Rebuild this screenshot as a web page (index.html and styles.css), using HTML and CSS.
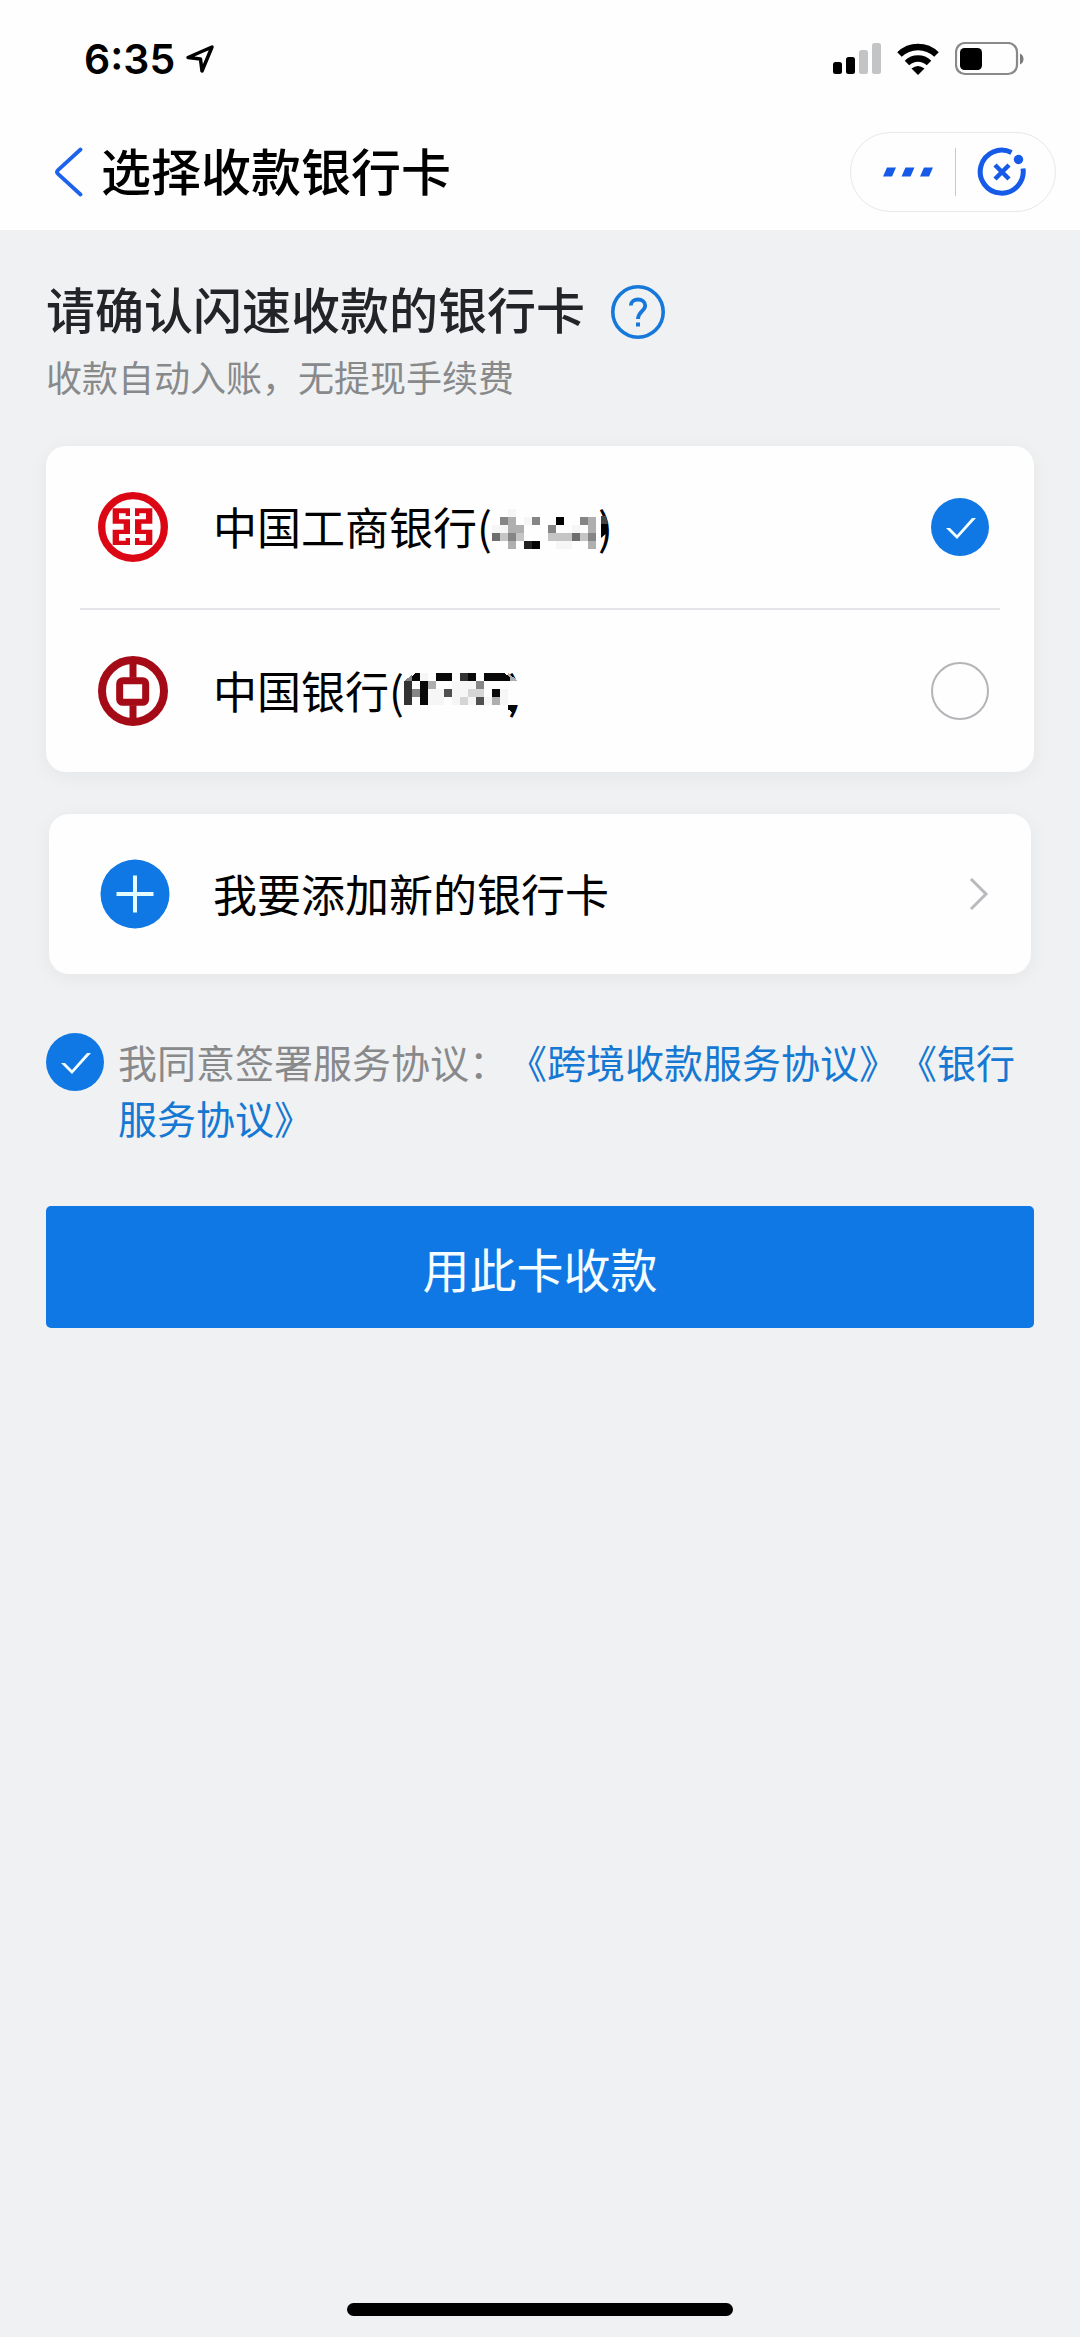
FILE: index.html
```html
<!DOCTYPE html>
<html lang="zh-CN">
<head>
<meta charset="utf-8">
<meta name="viewport" content="width=device-width, initial-scale=1">
<title>选择收款银行卡</title>
<link rel="stylesheet" href="styles.css">
</head>
<body>
<header class="top">
  <div class="status">
    <div class="status-left">
      <span class="time">6:35</span>
      <svg class="location" width="30" height="30" viewBox="0 0 30 30" aria-hidden="true"><path d="M3 13.500L27 3L17 27L15.500 15Z" fill="none" stroke="#000" stroke-width="3.500" stroke-linejoin="round"/></svg>
    </div>
    <div class="status-right">
      <svg width="48" height="32" viewBox="0 0 48 32" aria-hidden="true"><rect x="0" y="19" width="9" height="12" rx="2.500"/><rect x="13" y="14" width="9" height="17" rx="2.500"/><rect x="26" y="7" width="9" height="24" rx="2.500" fill="#c3c4c6"/><rect x="39" y="0" width="9" height="31" rx="2.500" fill="#c3c4c6"/></svg>
      <svg width="42" height="32" viewBox="0 0 42 32" aria-hidden="true"><g fill="none" stroke="#000" stroke-width="6.500"><path d="M2.500 11.500A26.500 26.500 0 0 1 39.500 11.500"/><path d="M10 20A15.800 15.800 0 0 1 32 20"/></g><path d="M14.500 25.500Q21 20.500 27.500 25.500L21 32Z"/></svg>
      <svg width="69" height="34" viewBox="0 0 69 34" aria-hidden="true"><rect x="1" y="1" width="61" height="31" rx="9" fill="none" stroke="#88898b" stroke-width="2.200"/><rect x="5" y="6" width="22" height="22" rx="4.500"/><path d="M65 11.500Q68.500 13 68.500 17Q68.500 21 65 22.500Z" fill="#7b7c7e"/></svg>
    </div>
  </div>
  <nav class="nav">
    <button class="plain back" type="button" aria-label="返回">
      <svg width="30" height="50" viewBox="0 0 30 50" aria-hidden="true"><path d="M26.500 2.500L4 23Q2 25 4 27L26.500 47.500" fill="none" stroke="#1c62ec" stroke-width="3.800" stroke-linecap="round"/></svg>
    </button>
    <h1 class="nav-title">选择收款银行卡</h1>
    <div class="capsule">
      <button class="plain more" type="button" aria-label="更多">
        <svg width="50" height="10" viewBox="0 0 50 10" fill="#155be8" aria-hidden="true"><path d="M4 0.500H13L9 9.500H0Z"/><path d="M22.500 0.500H31.500L27.500 9.500H18.500Z"/><path d="M41 0.500H50L46 9.500H37Z"/></svg>
      </button>
      <button class="plain close" type="button" aria-label="关闭">
        <svg width="50" height="50" viewBox="0 0 50 50" aria-hidden="true"><g fill="none" stroke="#155be8" stroke-width="5"><path d="M34.500 5.500A21.500 21.500 0 1 0 46 21.500"/><path d="M18 18L32 32M32 18L18 32" stroke-width="4.500"/></g><circle cx="41.500" cy="12.500" r="4.700" fill="#155be8"/></svg>
      </button>
    </div>
  </nav>
</header>

<main class="page">
  <div class="heading">
    <h2 class="heading-title">请确认闪速收款的银行卡</h2>
    <button class="plain help" type="button" aria-label="帮助">
      <svg width="54" height="54" viewBox="0 0 54 54" fill="none" stroke="#1578da" aria-hidden="true"><circle cx="27" cy="27" r="25.200" stroke-width="3.600"/><path d="M19.800 20.500C20 12.500 34 12.500 34.200 20.500C34.200 26 27 26.500 27 34" stroke-width="3.800"/><path d="M27 37.500V41.500" stroke-width="4"/></svg>
    </button>
  </div>
  <p class="subtitle">收款自动入账，无提现手续费</p>

  <div class="card banks">
    <label class="row">
      <svg class="logo" viewBox="0 0 210 210" aria-hidden="true"><circle cx="105" cy="105" r="94" fill="none" stroke="#dc0714" stroke-width="22"/><path fill="#dc0714" d="M44 49H96V72H83V64H63V82H96V126H63V146H83V138H96V159H44V113H77V95H44ZM111 49H163V95H130V113H163V159H111V138H124V146H144V126H111V82H144V64H124V72H111Z"/></svg>
      <span class="bank">中国工商银行(<svg class="mosaic" width="106" height="40" viewBox="0 0 106 40" shape-rendering="crispEdges" aria-hidden="true"><path fill="#f6f6f7" d="M16 0h8v8h-8zM32 8h8v8h-8zM0 16h16v8H0zM80 16h8v8h-8zM64 32h16v8H64z"/><path fill="#c5c5c6" d="M8 24h8v8H8zM24 24h8v8h-8zM56 24h24v8H56zM88 24h8v8h-8z"/><path fill="#afafb0" d="M16 8h8v16h-8zM24 16h8v8h-8zM16 32h8v8h-8zM96 8h8v16h-8zM96 32h8v8h-8z"/><path fill="#858586" d="M8 8h8v8H8zM16 24h8v8h-8zM40 8h8v8h-8zM56 16h8v8h-8zM88 8h8v8h-8zM96 24h8v8h-8z"/><path fill="#6e6e6f" d="M0 24h8v8H0zM80 24h8v8h-8z"/><path fill="#222" d="M32 32h8v8h-8z"/><path d="M64 8h8v8h-8zM40 32h8v8h-8z"/></svg><span class="paren">)<svg class="blot" width="8" height="22" viewBox="0 0 8 22" aria-hidden="true"><path fill="#444" d="M0 0H5L7 8H0Z"/><path d="M0 8H7V16L0 22Z"/></svg></span></span>
      <input class="tick" type="radio" name="bank" checked>
    </label>
    <hr class="divider">
    <label class="row">
      <svg class="logo" viewBox="0 0 210 210" aria-hidden="true"><g fill="none" stroke="#a50b17"><circle cx="105" cy="105" r="93" stroke-width="24"/><rect x="65" y="74" width="78" height="65" rx="9" stroke-width="21"/><path d="M105 20V65M105 148V190" stroke-width="21"/></g></svg>
      <span class="bank">中国银行(<svg class="mosaic mosaic-over" width="116" height="40" viewBox="0 0 116 40" shape-rendering="crispEdges" aria-hidden="true"><path fill="#fefefe" d="M100 8h16v24h-16z"/><path fill="#f6f6f7" d="M16 0h8v8h-8zM24 16h16v16H24zM48 8h24v24H48zM80 24h8v8h-8zM96 16h8v16h-8z"/><path fill="#d5d5d6" d="M64 16h16v8H64zM56 24h8v8h-8z"/><path fill="#aeaeaf" d="M24 8h8v8h-8zM88 24h8v8h-8zM104 0L114 8H104z"/><path fill="#868687" d="M8 16h8v8H8zM72 8h8v8h-8zM0 8L8 2V8z"/><path fill="#505051" d="M40 16h8v8h-8zM72 24h8v8h-8z"/><path fill="#333" d="M0 8h8v24H0zM56 0h8v8h-8z"/><path fill="#080808" d="M8 3L11 0H16V8H8zM16 8h8v24h-8zM32 0h16v8H32zM64 0h8v8h-8zM80 0h20L106 4V8H80zM88 16h8v8h-8zM104 32h8v5l-4 3-2-3h-2z"/></svg>)</span>
      <input class="tick" type="radio" name="bank">
    </label>
  </div>

  <button class="plain card row add" type="button">
    <svg class="logo" viewBox="0 0 70 70" aria-hidden="true"><circle cx="35" cy="35" r="34.500" fill="#1078e4"/><path d="M16.500 35H53.500M35 16.500V53.500" stroke="#e4fbff" stroke-width="4"/></svg>
    <span class="bank">我要添加新的银行卡</span>
    <svg width="20" height="34" viewBox="0 0 20 34" aria-hidden="true"><path d="M2 2L17 17L2 32" fill="none" stroke="#b9babd" stroke-width="3"/></svg>
  </button>

  <div class="agree">
    <input class="tick" type="checkbox" id="agree" checked>
    <p class="agree-text"><label for="agree">我同意签署服务协议：</label><a href="#cross-border">《跨境收款服务协议》</a><a href="#bank">《银行服务协议》</a></p>
  </div>

  <button class="plain submit" type="button">用此卡收款</button>
</main>
<div class="home-bar"></div>
</body>
</html>
```
FILE: styles.css
```css
* {
  box-sizing: border-box;
}

body {
  display: flex;
  flex-direction: column;
  min-height: 100vh;
  margin: 0;
  background: #f0f1f3;
  color: #000;
  font-family: "Noto Sans CJK SC", sans-serif;
  text-spacing-trim: space-all;
}

svg {
  flex: none;
}

h1, h2, p {
  margin: 0;
}

.plain {
  display: flex;
  align-items: center;
  padding: 0;
  border: 0;
  background: none;
  color: inherit;
  font: inherit;
}

.top {
  background: #fefefe;
}

.status {
  display: flex;
  align-items: center;
  justify-content: space-between;
  height: 118px;
  padding: 0 56px 0 84px;
}

.status-left {
  display: flex;
  align-items: center;
  gap: 10px;
}

.time {
  font: 600 41px/48px Inter, sans-serif;
}

.status-right {
  display: flex;
  align-items: center;
  gap: 16px;
}

.nav {
  display: flex;
  align-items: center;
  height: 112px;
  padding: 0 24px 4px 54px;
}

.nav-title {
  flex: 1;
  margin-left: 17px;
  padding-bottom: 6px;
  font-size: 50px;
  font-weight: 500;
  line-height: 72px;
}

.capsule {
  display: flex;
  align-items: center;
  width: 206px;
  height: 80px;
  border: 1px solid #e8e8ee;
  border-radius: 40px;
}

.more,
.close {
  flex: 1;
  justify-content: center;
  height: 48px;
}

.more {
  padding-left: 10px;
  border-right: 1px solid #c8c9cc;
}

.close {
  padding-right: 6px;
}

.page {
  display: flex;
  flex-direction: column;
  padding: 44px 46px;
}

.heading {
  display: flex;
  align-items: center;
  gap: 26px;
}

.heading-title {
  padding-bottom: 8px;
  color: #222427;
  font-size: 49px;
  font-weight: 500;
  line-height: 68px;
}

.subtitle {
  color: #88898b;
  font-size: 36px;
  line-height: 52px;
}

.card {
  border-radius: 20px;
  background: #fefefe;
  box-shadow: 0 4px 20px rgb(0 0 0 / 5%);
}

.banks {
  margin-top: 44px;
}

.row {
  display: flex;
  align-items: center;
  height: 162px;
  padding: 0 45px 0 52px;
}

.logo {
  width: 70px;
  height: 70px;
}

.bank {
  flex: 1;
  margin-left: 45px;
  padding-bottom: 3px;
  font-size: 44px;
  line-height: 64px;
  text-align: left;
}

.mosaic {
  vertical-align: -4px;
}

.mosaic-over {
  position: relative;
  margin-right: -12px;
}

.paren {
  position: relative;
}

.blot {
  position: absolute;
  top: 22px;
  left: 3px;
}

.divider {
  height: 2px;
  margin: 0 34px;
  border: 0;
  background: #e4e5e8;
}

.tick {
  flex: none;
  width: 58px;
  height: 58px;
  margin: 0;
  border: 2px solid #b4b5b8;
  border-radius: 50%;
  appearance: none;
}

.tick:checked {
  border: 0;
  background: #1078e4;
}

.tick:checked::before {
  display: block;
  width: 58px;
  height: 58px;
  background: #f4fdff;
  clip-path: polygon(15px 30px, 19px 30px, 26px 37px, 41px 20px, 45px 20px, 26px 41px);
  content: "";
}

.add {
  height: 160px;
  margin: 42px 3px 0;
  padding: 0 42px 0 51px;
}

.add .bank {
  margin-left: 43px;
}

.agree {
  display: flex;
  align-items: flex-start;
  gap: 14px;
  margin-top: 59px;
}

.agree-text {
  flex: 1;
  color: #88898b;
  font-size: 39px;
  line-height: 56px;
}

.agree-text a {
  color: #1578d2;
  text-decoration: none;
}

.submit {
  justify-content: center;
  height: 122px;
  margin-top: 61px;
  border-radius: 5px;
  background: #1078e4;
  color: #f4fdff;
  font-size: 47px;
}

.home-bar {
  width: 386px;
  height: 13px;
  margin: auto auto 21px;
  border-radius: 7px;
  background: #000;
}
```
